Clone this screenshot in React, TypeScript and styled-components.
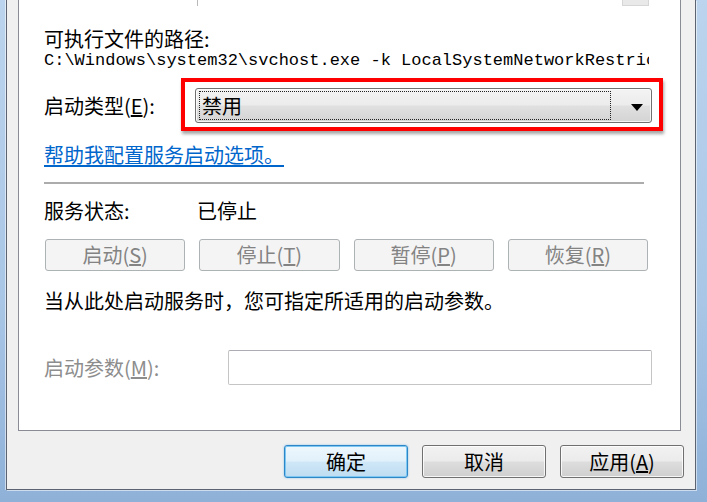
import React from "react";
import styled, { createGlobalStyle } from "styled-components";

const GlobalStyle = createGlobalStyle`
  html, body { margin: 0; padding: 0; background: #ffffff; }
  body { font-family: "Noto Sans CJK SC", "Noto Sans", sans-serif; }
  #root { width: 707px; height: 502px; }
`;

const CJK = `"Noto Sans CJK SC", "Noto Sans", sans-serif`;

const Frame = styled.div`
  width: 707px;
  height: 502px;
  box-sizing: border-box;
  padding: 0 11px 12px 6px;
  display: flex;
  background: linear-gradient(180deg, #bcd4ed 0%, #a9c6e6 60%, #8fb1d8 100%);
`;

const Client = styled.div`
  flex: 1;
  display: flex;
  flex-direction: column;
  background: #f0f0f0;
  border: 1px solid #5b6470;
  border-top: none;
  padding: 0 11px 0 11px;
  box-shadow: 1px 1px 0 rgba(255, 255, 255, 0.55), -1px 0 0 rgba(255, 255, 255, 0.55);
`;

const TabPanel = styled.div`
  flex: none;
  height: 431px;
  box-sizing: border-box;
  margin-right: 3px;
  background: #ffffff;
  border: 1px solid #898c95;
  border-top: none;
  padding: 0 28px 0 25px;
  display: flex;
  flex-direction: column;
  font-family: ${CJK};
  font-size: 20px;
  color: #000000;
`;

const DescStub = styled.div`
  height: 6px;
  margin-left: 153px;
  border-left: 1px solid #b9b9b9;
  display: flex;
  justify-content: flex-end;
  padding-right: 3px;
`;

const ScrollStub = styled.div`
  width: 25px;
  height: 5px;
  background: #e9e9e9;
  border: 1px solid #d6d6d6;
  border-top: none;
`;

const TextLine = styled.div<{ $top: number; $muted?: boolean }>`
  margin-top: ${(p) => p.$top}px;
  height: 22px;
  line-height: 22px;
  white-space: nowrap;
  color: ${(p) => (p.$muted ? "#8d8d8d" : "#000000")};
`;

const PathValue = styled.div`
  margin-top: 2px;
  width: 605px;
  height: 18px;
  line-height: 18px;
  overflow: hidden;
  white-space: nowrap;
  font-family: "Liberation Mono", "DejaVu Sans Mono", monospace;
  font-size: 17px;
  color: #000000;
`;

const FieldRow = styled.div<{ $top: number }>`
  margin-top: ${(p) => p.$top}px;
  height: 35px;
  display: flex;
  align-items: center;
`;

const FieldLabel = styled.div<{ $width: number; $muted?: boolean }>`
  flex: none;
  width: ${(p) => p.$width}px;
  line-height: 22px;
  white-space: nowrap;
  color: ${(p) => (p.$muted ? "#8d8d8d" : "#000000")};
`;

const Combo = styled.div`
  position: relative;
  flex: 1;
  height: 35px;
  box-sizing: border-box;
  border: 1px solid #707070;
  border-radius: 3px;
  background: linear-gradient(180deg, #f3f3f3 0%, #ececec 48%, #e0e0e0 52%, #d4d4d4 100%);
  box-shadow: inset 0 0 0 1px rgba(255, 255, 255, 0.75);
  display: flex;
  align-items: center;
  padding: 2px 8px 2px 3px;
`;

const FocusRect = styled.div`
  flex: 1;
  align-self: stretch;
  margin-right: 20px;
  border: 1px dotted #222222;
  display: flex;
  align-items: center;
  padding-left: 2px;
  line-height: 22px;
`;

const Arrow = styled.div`
  flex: none;
  width: 0;
  height: 0;
  border-left: 6px solid transparent;
  border-right: 6px solid transparent;
  border-top: 7px solid #000000;
  margin-top: 3px;
`;

const RedMark = styled.div`
  position: absolute;
  left: -15px;
  top: -11px;
  right: -12px;
  bottom: -9px;
  border: 4px solid #ff0000;
  box-shadow: 1px 3px 3px rgba(0, 0, 0, 0.35);
  pointer-events: none;
`;

const HelpLink = styled.a`
  margin-top: 21px;
  height: 22px;
  line-height: 22px;
  color: #0066cc;
  text-decoration: underline;
  text-underline-offset: 2px;
  white-space: nowrap;
  align-self: flex-start;
`;

const Separator = styled.div`
  margin-top: 16px;
  margin-right: 8px;
  height: 2px;
  background: #acacac;
`;

const StatusRow = styled.div`
  margin-top: 16px;
  height: 22px;
  line-height: 22px;
  display: flex;
`;

const ControlGrid = styled.div`
  margin-top: 17px;
  margin-left: 1px;
  width: 603px;
  display: grid;
  grid-template-columns: repeat(4, 1fr);
  column-gap: 14px;
`;

const DisabledButton = styled.button`
  height: 32px;
  box-sizing: border-box;
  border: 1px solid #adb2b5;
  border-radius: 3px;
  background: #f4f4f4;
  color: #838383;
  font-family: ${CJK};
  font-size: 20px;
  line-height: 22px;
  padding: 0;
`;

const TextInput = styled.div`
  flex: 1;
  height: 35px;
  box-sizing: border-box;
  border: 1px solid #c5c5c5;
  border-top-color: #abadb3;
  border-radius: 2px;
  background: #ffffff;
`;

const ButtonBar = styled.div`
  margin-top: 14px;
  display: flex;
  justify-content: flex-end;
  gap: 14px;
`;

const DialogButton = styled.button<{ $default?: boolean }>`
  width: 124px;
  height: 33px;
  box-sizing: border-box;
  border-radius: 3px;
  padding: 0;
  font-family: ${CJK};
  font-size: 20px;
  line-height: 22px;
  color: #000000;
  border: 1px solid ${(p) => (p.$default ? "#2c86c8" : "#707070")};
  background: ${(p) =>
    p.$default
      ? "linear-gradient(180deg, #eef7fd 0%, #e1f1fb 48%, #cfe7f7 52%, #bedcf1 100%)"
      : "linear-gradient(180deg, #f2f2f2 0%, #ebebeb 48%, #dddddd 52%, #cfcfcf 100%)"};
  box-shadow: ${(p) =>
    p.$default
      ? "inset 0 0 0 1px #7cc8f2, 0 0 2px rgba(60, 160, 230, 0.6)"
      : "inset 0 0 0 1px rgba(255, 255, 255, 0.8)"};
`;

export default function App() {
  return (
    <>
      <GlobalStyle />
      <Frame>
        <Client>
          <TabPanel>
            <DescStub>
              <ScrollStub />
            </DescStub>
            <TextLine $top={22}>可执行文件的路径:</TextLine>
            <PathValue>C:\Windows\system32\svchost.exe -k LocalSystemNetworkRestricted</PathValue>
            <FieldRow $top={18}>
              <FieldLabel $width={151}>
                启动类型(<u>E</u>):
              </FieldLabel>
              <Combo>
                <FocusRect>禁用</FocusRect>
                <Arrow />
                <RedMark />
              </Combo>
            </FieldRow>
            <HelpLink href="#">帮助我配置服务启动选项。</HelpLink>
            <Separator />
            <StatusRow>
              <FieldLabel $width={153}>服务状态:</FieldLabel>
              <span>已停止</span>
            </StatusRow>
            <ControlGrid>
              <DisabledButton disabled>
                启动(<u>S</u>)
              </DisabledButton>
              <DisabledButton disabled>
                停止(<u>T</u>)
              </DisabledButton>
              <DisabledButton disabled>
                暂停(<u>P</u>)
              </DisabledButton>
              <DisabledButton disabled>
                恢复(<u>R</u>)
              </DisabledButton>
            </ControlGrid>
            <TextLine $top={19}>当从此处启动服务时，您可指定所适用的启动参数。</TextLine>
            <FieldRow $top={38}>
              <FieldLabel $width={184} $muted>
                启动参数(<u>M</u>):
              </FieldLabel>
              <TextInput />
            </FieldRow>
          </TabPanel>
          <ButtonBar>
            <DialogButton $default>确定</DialogButton>
            <DialogButton>取消</DialogButton>
            <DialogButton>
              应用(<u>A</u>)
            </DialogButton>
          </ButtonBar>
        </Client>
      </Frame>
    </>
  );
}
